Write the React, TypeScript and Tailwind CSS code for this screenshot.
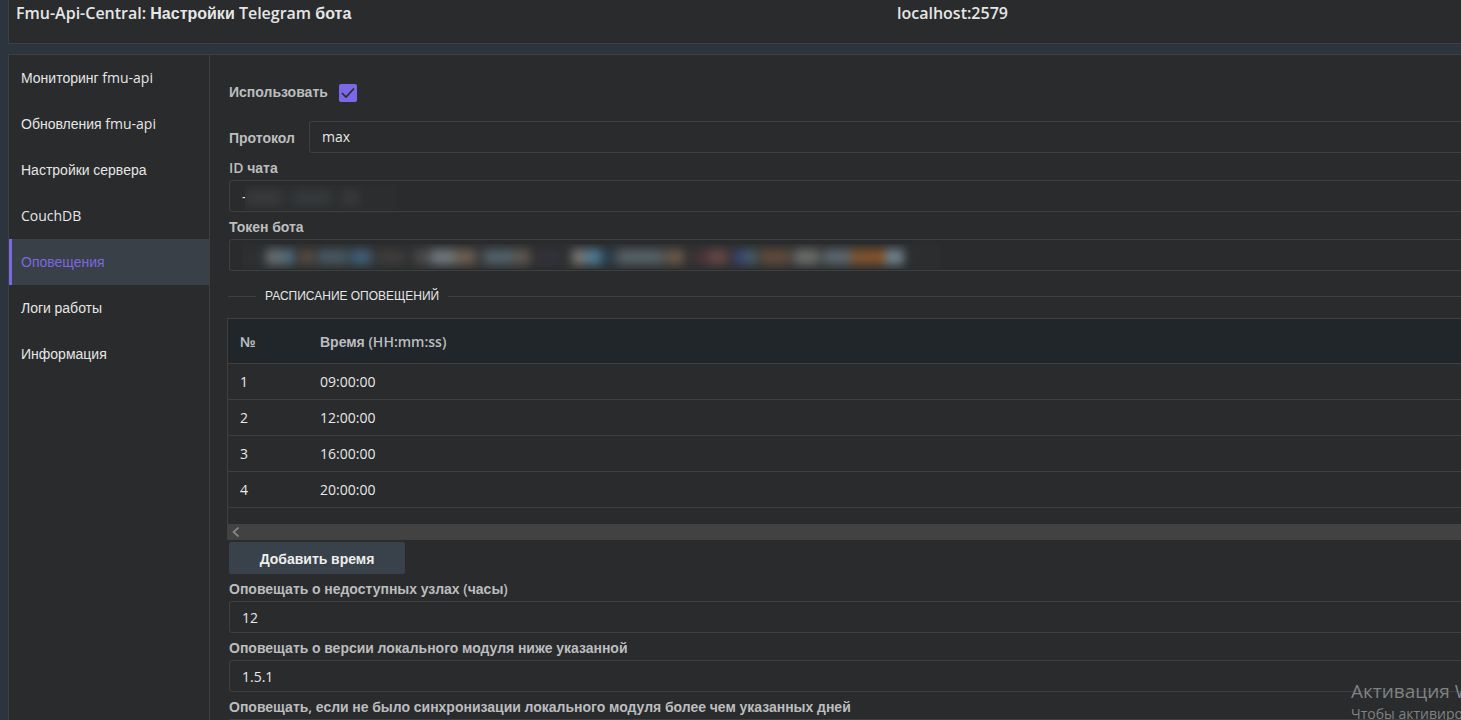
import { Fragment, type ReactNode } from "react";

const menuItems = [
  "Мониторинг fmu-api",
  "Обновления fmu-api",
  "Настройки сервера",
  "CouchDB",
  "Оповещения",
  "Логи работы",
  "Информация",
];

const schedule = ["09:00:00", "12:00:00", "16:00:00", "20:00:00"];

// [width, color] runs of the hidden values
const chatMask: [number, string][] = [
  [36, "#38393b"],
  [14, "#2e3032"],
  [36, "#36393b"],
  [11, "#2c2d2f"],
  [18, "#37383a"],
];

const tokenMask: [number, string][] = [
  [24, "#2f3031"],
  [16, "#656c70"],
  [12, "#4f6a79"],
  [6, "#33363a"],
  [14, "#57493e"],
  [4, "#35383b"],
  [29, "#48555e"],
  [5, "#34424c"],
  [19, "#405e74"],
  [7, "#333434"],
  [26, "#3e3b3b"],
  [11, "#323232"],
  [16, "#4a4a49"],
  [24, "#6c757a"],
  [20, "#6c5d50"],
  [9, "#37393b"],
  [29, "#515f67"],
  [17, "#5d5650"],
  [8, "#303031"],
  [20, "#32313b"],
  [14, "#303132"],
  [14, "#757470"],
  [15, "#4d7a93"],
  [13, "#2b3e50"],
  [4, "#393f44"],
  [44, "#556066"],
  [5, "#4d4c4b"],
  [17, "#675646"],
  [10, "#323031"],
  [14, "#47333a"],
  [20, "#5f4643"],
  [6, "#332e35"],
  [12, "#3b4670"],
  [10, "#445c66"],
  [5, "#40403e"],
  [28, "#5e4a3a"],
  [6, "#444241"],
  [23, "#6a6a69"],
  [7, "#464a4d"],
  [26, "#5a656d"],
  [34, "#80522d"],
  [19, "#6e7e88"],
];

// Cyrillic runs use the Arial-like face, the rest stays in Open Sans
function Txt({ children }: { children: string }) {
  return (
    <span className="whitespace-pre">
      {children.split(/([А-Яа-яЁё№]+)/).map((part, index) =>
        index % 2 ? (
          <span key={index} className="font-['Liberation_Sans',sans-serif]">
            {part}
          </span>
        ) : (
          <Fragment key={index}>{part}</Fragment>
        )
      )}
    </span>
  );
}

function Label({ children }: { children: string }) {
  return (
    <div className="flex h-[27px] items-center pt-[3px] font-semibold text-[#bcbdbf]">
      <Txt>{children}</Txt>
    </div>
  );
}

function Field({ children }: { children?: ReactNode }) {
  return (
    <div className="flex h-8 grow items-center overflow-hidden rounded-l-[3px] border border-r-0 border-[#3d3f40] pl-3 text-[#e8e8e8]">
      {children}
    </div>
  );
}

function Mask({ runs }: { runs: [number, string][] }) {
  return (
    <div className="mt-0.5 flex h-[25px] items-center overflow-hidden bg-[#2b2d2e] pr-9">
      <div className="mt-0.5 flex h-4 blur-[5px]">
        {runs.map(([width, color], index) => (
          <div key={index} style={{ width, backgroundColor: color }} />
        ))}
      </div>
    </div>
  );
}

function Sidebar() {
  return (
    <nav className="w-[201px] shrink-0 border-r border-[#3d3f40]">
      {menuItems.map((item) => (
        <div
          key={item}
          className={
            item === "Оповещения"
              ? "flex h-[46px] items-center border-l-[3px] border-[#7b68e0] bg-[#394047] pl-[9px] text-[#7b68e0]"
              : "flex h-[46px] items-center pl-3 text-[#e6e6e6]"
          }
        >
          <Txt>{item}</Txt>
        </div>
      ))}
    </nav>
  );
}

function ScheduleTable() {
  return (
    <div className="-ml-0.5 border-l border-t border-[#3d3f40]">
      <div className="flex h-[45px] items-center border-b border-[#3d3f40] bg-[#20262a] pt-0.5 font-semibold text-[#bcbdbf]">
        <div className="w-20 pl-3">
          <Txt>№</Txt>
        </div>
        <div className="pl-3">
          <Txt>Время (HH:mm:ss)</Txt>
        </div>
      </div>
      {schedule.map((time, index) => (
        <div
          key={time}
          className="flex h-9 items-center border-b border-[#3d3f40] pt-px text-[#e8e8e8]"
        >
          <div className="w-20 pl-3">{index + 1}</div>
          <div className="pl-3">{time}</div>
        </div>
      ))}
      <div className="h-4" />
      <div className="flex h-4 items-center bg-[#424242] pb-px pl-1">
        <svg width="8" height="10" viewBox="0 0 8 10" fill="none" stroke="#858585" strokeWidth="1.7">
          <path d="M6.5 0.5 L1.5 5 L6.5 9.5" />
        </svg>
      </div>
    </div>
  );
}

export default function App() {
  return (
    <div className="relative flex h-[720px] w-full flex-col overflow-hidden bg-[#2c343d] pl-2 font-['Open_Sans',sans-serif] text-sm leading-5">
      <header className="flex h-11 shrink-0 border-b border-l border-[#3d3f40] bg-[#292b2c] pl-[7px] pt-px text-base font-semibold leading-6 text-[#e6e6e6]">
        <div className="w-[881px]">
          <Txt>Fmu-Api-Central: Настройки Telegram бота</Txt>
        </div>
        <div>localhost:2579</div>
      </header>

      <div className="mt-2.5 flex grow border-l border-t border-[#3d3f40] bg-[#292b2c]">
        <Sidebar />
        <main className="flex min-w-0 grow flex-col pl-[19px] pt-[19px]">
          <div className="flex h-[38px] items-center font-semibold text-[#bcbdbf]">
            <div className="w-[110px] pb-0.5">
              <Txt>Использовать</Txt>
            </div>
            <div className="flex size-[18px] items-center justify-center rounded-xs bg-[#7b68e8]">
              <svg width="14" height="12" viewBox="0 0 14 12" fill="none" stroke="#2a2c2d" strokeWidth="1.7">
                <path d="M1 6 L5 10 L13 1.5" />
              </svg>
            </div>
          </div>

          <div className="mt-[9px] flex items-center">
            <div className="w-20 pt-0.5 font-semibold text-[#bcbdbf]">
              <Txt>Протокол</Txt>
            </div>
            <Field>max</Field>
          </div>

          <Label>ID чата</Label>
          <div className="flex">
            <Field>
              <span className="w-[3px] pt-0.5">-</span>
              <Mask runs={chatMask} />
            </Field>
          </div>

          <Label>Токен бота</Label>
          <div className="flex">
            <Field>
              <Mask runs={tokenMask} />
            </Field>
          </div>

          <div className="-ml-px flex h-[47px] items-center pb-px pt-1 text-xs text-[#e6e6e6]">
            <div className="h-px w-7 bg-[#3d3f40]" />
            <div className="px-[9px]">
              <Txt>РАСПИСАНИЕ ОПОВЕЩЕНИЙ</Txt>
            </div>
            <div className="h-px grow bg-[#3d3f40]" />
          </div>

          <ScheduleTable />

          <button className="mt-0.5 h-8 w-44 shrink-0 rounded-xs bg-[#39424a] pt-0.5 font-semibold text-[#eeeeee]">
            <Txt>Добавить время</Txt>
          </button>

          <Label>Оповещать о недоступных узлах (часы)</Label>
          <div className="flex">
            <Field>
              <span className="pt-0.5">12</span>
            </Field>
          </div>
          <Label>Оповещать о версии локального модуля ниже указанной</Label>
          <div className="flex">
            <Field>
              <span className="pt-0.5">1.5.1</span>
            </Field>
          </div>
          <Label>Оповещать, если не было синхронизации локального модуля более чем указанных дней</Label>
          <div className="h-px shrink-0 bg-[#3d3f40]" />
        </main>
      </div>

      <div className="absolute left-[1351px] top-[678px] whitespace-nowrap text-[#808284]">
        <div className="text-[19px] leading-[26px]">Активация Windows</div>
        <div className="text-sm leading-5">Чтобы активировать Windows</div>
      </div>
    </div>
  );
}
